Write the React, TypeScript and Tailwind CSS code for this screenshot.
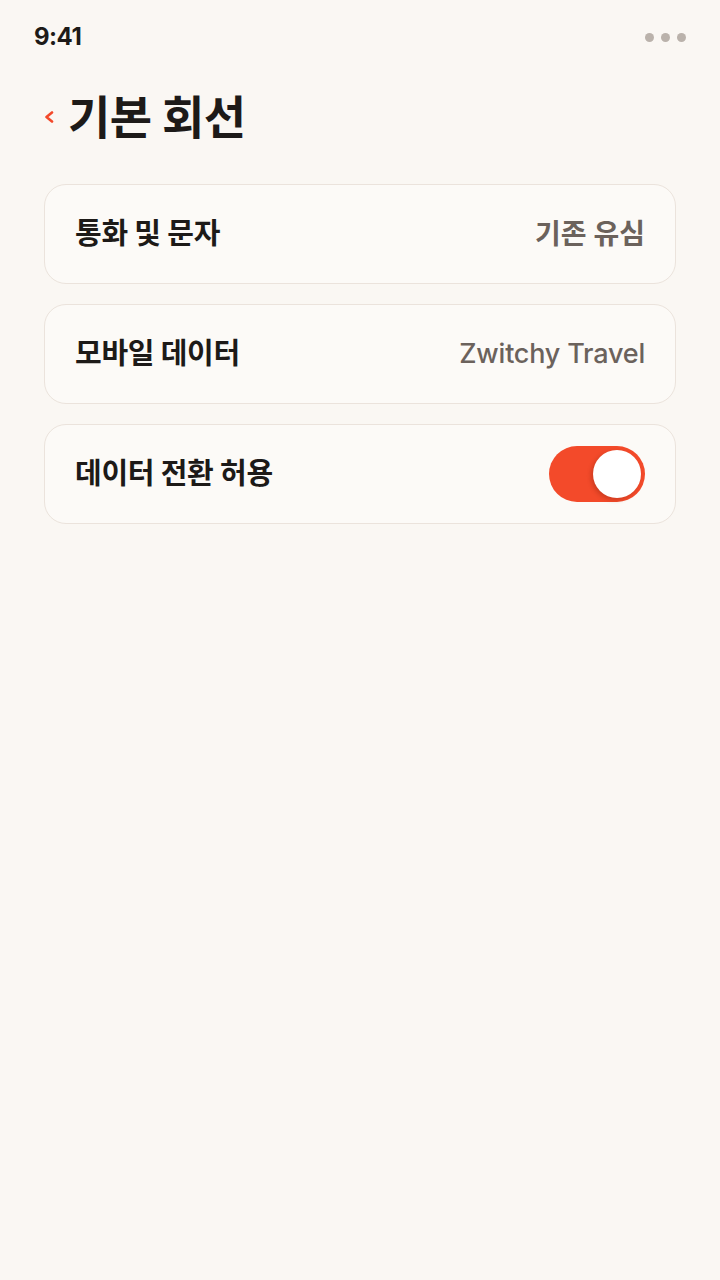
import React, { useState } from 'react';

const FONT = "font-['Inter','Noto_Sans_CJK_KR',sans-serif]";

interface RowProps {
  label: string;
  children: React.ReactNode;
}

const Row: React.FC<RowProps> = ({ label, children }) => (
  <div className="flex items-center justify-between h-[100px] px-[30px] bg-[#fcfaf7] border-[1.5px] border-[#ebe3dc] rounded-[22px]">
    <span className="text-[29px] font-bold text-[#1d1a18] tracking-[-0.3px]">{label}</span>
    {children}
  </div>
);

const App: React.FC = () => {
  const [on, setOn] = useState(true);

  return (
    <div className={`min-h-[1280px] w-full bg-[#faf7f3] ${FONT}`}>
      {/* Status bar */}
      <div className="flex items-center justify-between pl-[34px] pr-[34px] pt-[22px] h-[52px]">
        <span className="text-[24px] font-bold text-[#1d1a18] tracking-[-0.5px]">9:41</span>
        <div className="flex items-center gap-[7px]">
          <span className="w-[9px] h-[9px] rounded-full bg-[#bab2ab]"></span>
          <span className="w-[9px] h-[9px] rounded-full bg-[#bab2ab]"></span>
          <span className="w-[9px] h-[9px] rounded-full bg-[#bab2ab]"></span>
        </div>
      </div>

      {/* Header */}
      <div className="flex items-center pl-[44px] mt-[33px] h-[64px]">
        <svg width="10" height="12" viewBox="0 0 10 12" className="mr-[14px]">
          <path d="M8 1.5 L2.5 6 L8 10.5" fill="none" stroke="#f3492a" strokeWidth="2.6" strokeLinecap="round" strokeLinejoin="round" />
        </svg>
        <h1 className="text-[46px] font-bold text-[#1d1a18] tracking-[-0.5px] leading-none">기본 회선</h1>
      </div>

      {/* Rows */}
      <div className="flex flex-col gap-5 px-[44px] mt-[35px]">
        <Row label="통화 및 문자">
          <span className="text-[28px] font-semibold text-[#6b625c]">기존 유심</span>
        </Row>
        <Row label="모바일 데이터">
          <span className="text-[27px] font-medium text-[#6b625c] tracking-[-0.2px]">Zwitchy Travel</span>
        </Row>
        <Row label="데이터 전환 허용">
          <button
            onClick={() => setOn(!on)}
            className={`relative w-[96px] h-[56px] rounded-full flex items-center px-1 ${on ? 'bg-[#f34a2a] justify-end' : 'bg-[#d8d0c8] justify-start'}`}
          >
            <span className="w-[48px] h-[48px] rounded-full bg-white shadow-[-2px_2px_4px_rgba(120,30,10,0.3)]"></span>
          </button>
        </Row>
      </div>
    </div>
  );
};

export default App;
